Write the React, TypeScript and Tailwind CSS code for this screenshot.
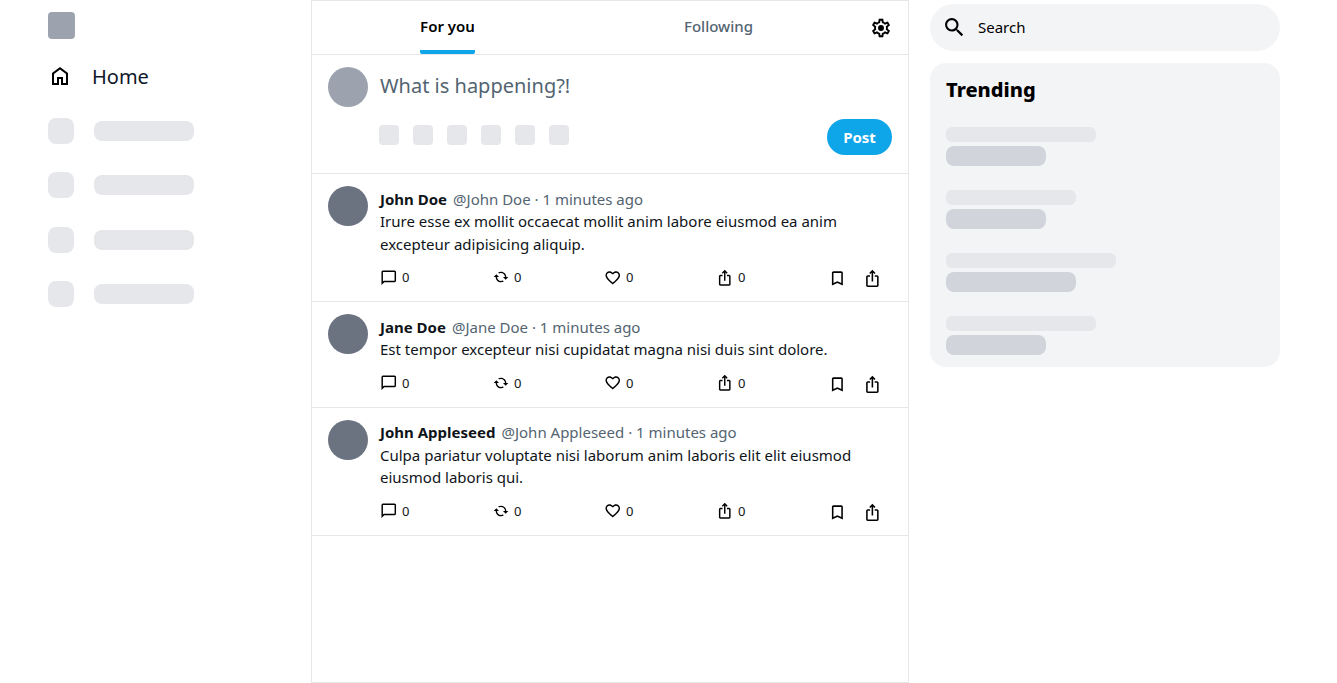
import React from "react";

type IconProps = { d: string; size?: string; box?: string };

function Icon({ d, size = "size-[18.75px]", box = "0 -960 960 960" }: IconProps) {
  return (
    <svg viewBox={box} className={`${size} shrink-0 fill-black`} aria-hidden="true">
      <path d={d} />
    </svg>
  );
}

const HOME = "M240-200h120v-240h240v240h120v-360L480-740 240-560v360Zm-80 80v-480l320-240 320 240v480H520v-240h-80v240H160Z";
const CHAT = "M80-80v-720q0-33 23.5-56.5T160-880h640q33 0 56.5 23.5T880-800v480q0 33-23.5 56.5T800-240H240L80-80Zm126-240h594v-480H160v525l46-45Z";
const SHARE = "M240-40q-33 0-56.5-23.5T160-120v-440q0-33 23.5-56.5T240-640h120v80H240v440h480v-440H600v-80h120q33 0 56.5 23.5T800-560v440q0 33-23.5 56.5T720-40H240Zm200-280v-447l-64 64-56-57 160-160 160 160-56 57-64-64v447h-80Z";
const BOOKMARK = "M200-120v-640q0-33 23.5-56.5T280-840h400q33 0 56.5 23.5T760-760v640L480-240 200-120Zm80-122 200-86 200 86v-518H280v518Z";
const SEARCH = "M15.5 14h-.79l-.28-.27C15.41 12.59 16 11.11 16 9.5 16 5.91 13.09 3 9.5 3S3 5.91 3 9.5 5.91 16 9.5 16c1.61 0 3.09-.59 4.23-1.57l.27.28v.79l5 4.99L20.49 19l-4.99-5zm-6 0C7.01 14 5 11.99 5 9.5S7.01 5 9.5 5 14 7.01 14 9.5 11.99 14 9.5 14z";
const HEART = "M16.5 3c-1.74 0-3.41.81-4.5 2.09C10.91 3.81 9.24 3 7.5 3 4.42 3 2 5.42 2 8.5c0 3.78 3.4 6.86 8.55 11.54L12 21.35l1.45-1.32C18.6 15.36 22 12.28 22 8.5 22 5.42 19.58 3 16.5 3zm-4.4 15.55-.1.1-.1-.1C7.14 14.24 4 11.39 4 8.5 4 6.5 5.5 5 7.5 5c1.54 0 3.04.99 3.57 2.36h1.87C13.46 5.99 14.96 5 16.5 5c2 0 3.5 1.5 3.5 3.5 0 2.89-3.14 5.74-7.9 10.05z";
const CYCLE = "M5 8 1 12h3c0 4.42 3.58 8 8 8 1.57 0 3.03-.46 4.26-1.24L14.8 17.3c-.83.45-1.79.7-2.8.7-3.31 0-6-2.69-6-6h3L5 8zm13 4h-3l4 4 4-4h-3c0-4.42-3.58-8-8-8-1.57 0-3.03.46-4.26 1.24L9.2 6.7c.83-.45 1.79-.7 2.8-.7 3.31 0 6 2.69 6 6z";
const GEAR = "M19.43 12.98c.04-.32.07-.64.07-.98s-.03-.66-.07-.98l2.11-1.65c.19-.15.24-.42.12-.64l-2-3.46c-.09-.16-.26-.25-.44-.25-.06 0-.12.01-.17.03l-2.49 1c-.52-.4-1.08-.73-1.69-.98l-.38-2.65C14.46 2.18 14.25 2 14 2h-4c-.25 0-.46.18-.49.42l-.38 2.65c-.61.25-1.17.59-1.69.98l-2.49-1c-.06-.02-.12-.03-.18-.03-.17 0-.34.09-.43.25l-2 3.46c-.13.22-.07.49.12.64l2.11 1.65c-.04.32-.07.65-.07.98s.03.66.07.98l-2.11 1.65c-.19.15-.24.42-.12.64l2 3.46c.09.16.26.25.44.25.06 0 .12-.01.17-.03l2.49-1c.52.4 1.08.73 1.69.98l.38 2.65c.03.24.24.42.49.42h4c.25 0 .46-.18.49-.42l.38-2.65c.61-.25 1.17-.59 1.69-.98l2.49 1c.06.02.12.03.18.03.17 0 .34-.09.43-.25l2-3.46c.12-.22.07-.49-.12-.64l-2.11-1.65zm-1.98-1.71c.04.31.05.52.05.73 0 .21-.02.43-.05.73l-.14 1.13.89.7 1.08.84-.7 1.21-1.27-.51-1.04-.42-.9.68c-.43.32-.84.56-1.25.73l-1.06.43-.16 1.13-.2 1.35h-1.4l-.19-1.35-.16-1.13-1.06-.43c-.43-.18-.83-.41-1.23-.71l-.91-.7-1.06.43-1.27.51-.7-1.21 1.08-.84.89-.7-.14-1.13c-.03-.31-.05-.54-.05-.74s.02-.43.05-.73l.14-1.13-.89-.7-1.08-.84.7-1.21 1.27.51 1.04.42.9-.68c.43-.32.84-.56 1.25-.73l1.06-.43.16-1.13.2-1.35h1.39l.19 1.35.16 1.13 1.06.43c.43.18.83.41 1.23.71l.91.7 1.06-.43 1.27-.51.7 1.21-1.07.85-.89.7.14 1.13zM12 8.8a3.2 3.2 0 1 0 0 6.4 3.2 3.2 0 0 0 0-6.4z";

function Sidebar() {
  return (
    <nav className="w-[263px] pt-3">
      <div className="size-[27px] rounded bg-[#9ca3af]" />
      <a className="mt-[23px] flex h-[30px] items-center gap-5 text-xl text-[#0f172a]">
        <span className="pb-0.5">
          <Icon d={HOME} size="size-6" />
        </span>
        Home
      </a>
      <div className="mt-[26px] flex flex-col gap-[28.3px]">
        {[1, 2, 3, 4].map((n) => (
          <div key={n} className="flex items-center gap-5">
            <div className="size-[26px] rounded-lg bg-[#e5e7eb]" />
            <div className="h-5 w-[100px] rounded-lg bg-[#e5e7eb]" />
          </div>
        ))}
      </div>
    </nav>
  );
}

type Tweet = { name: string; text: string };

const tweets: Tweet[] = [
  { name: "John Doe", text: "Irure esse ex mollit occaecat mollit anim labore eiusmod ea anim excepteur adipisicing aliquip." },
  { name: "Jane Doe", text: "Est tempor excepteur nisi cupidatat magna nisi duis sint dolore." },
  { name: "John Appleseed", text: "Culpa pariatur voluptate nisi laborum anim laboris elit elit eiusmod eiusmod laboris qui." },
];

function Action({ children }: { children: React.ReactNode }) {
  return (
    <div className="flex w-28 items-center gap-1 text-[13px] leading-4">
      <span className="flex w-[18px] justify-center">{children}</span>0
    </div>
  );
}

function Post({ name, text }: Tweet) {
  return (
    <article className="flex gap-3 border-b border-[#e5e7eb] px-4 pt-3 pb-[14.25px]">
      <div className="size-10 shrink-0 rounded-full bg-[#6b7280]" />
      <div className="min-w-0 flex-1 pt-[1.75px] leading-[22.5px] text-[#0f1419]">
        <div className="flex gap-1.5 text-[#536471]">
          <span className="font-bold text-[#0f1419]">{name}</span>
          <span>@{name} · 1 minutes ago</span>
        </div>
        <p>{text}</p>
        <div className="mt-[12.75px] flex h-[18.75px] items-center">
          <Action><Icon d={CHAT} size="size-[17.5px]" /></Action>
          <Action><Icon d={CYCLE} size="size-4" box="0 0 24 24" /></Action>
          <Action><Icon d={HEART} size="size-[17.5px]" box="0 0 24 24" /></Action>
          <Action><Icon d={SHARE} size="size-[17.5px]" /></Action>
          <div className="flex gap-4 pt-[2.5px]">
            <Icon d={BOOKMARK} />
            <Icon d={SHARE} />
          </div>
        </div>
      </div>
    </article>
  );
}

const trends = [
  ["w-[150px]", "w-[100px]"],
  ["w-[130px]", "w-[100px]"],
  ["w-[170px]", "w-[130px]"],
  ["w-[150px]", "w-[100px]"],
];

export default function App() {
  return (
    <div className="flex h-[683px] overflow-hidden bg-white pl-12 font-['Noto_Sans',sans-serif] text-[15px] text-black">
      <Sidebar />
      <main className="w-[598px] border border-[#e5e7eb]">
        <div className="flex h-[54px] border-b border-[#e5e7eb]">
          <div className="flex w-[271px] justify-center">
            <div className="flex flex-col font-semibold">
              <span className="flex flex-1 items-center pt-0.5">For you</span>
              <span className="h-1 rounded-b-xs bg-[#0ea5e9]" />
            </div>
          </div>
          <div className="flex w-[271px] items-center justify-center pb-0.5 font-medium text-[#536471]">Following</div>
          <div className="flex flex-1 items-center justify-center">
            <Icon d={GEAR} size="size-[22px] stroke-black [stroke-width:0.1]" box="0 0 24 24" />
          </div>
        </div>
        <section className="flex h-[119px] gap-3 border-b border-[#e5e7eb] px-4 pt-3">
          <div className="size-10 rounded-full bg-[#9ca3af]" />
          <div className="flex-1">
            <div className="flex h-[38px] items-center text-xl text-[#536471]">What is happening?!</div>
            <div className="mt-3.5 flex items-start justify-between">
              <div className="-ml-px flex gap-3.5 pt-1.5">
                {[1, 2, 3, 4, 5, 6].map((n) => <div key={n} className="size-5 rounded bg-[#e5e7eb]" />)}
              </div>
              <button className="h-9 w-[65px] rounded-full bg-[#0ea5e9] font-bold text-white">Post</button>
            </div>
          </div>
        </section>
        {tweets.map((t) => <Post key={t.name} {...t} />)}
      </main>
      <aside className="ml-[21px] w-[350px] pt-1">
        <div className="flex h-[47px] items-center gap-[11.25px] rounded-full bg-[#f3f4f6] px-3">
          <Icon d={SEARCH} size="size-[24.75px]" box="0 0 24 24" />
          <span>Search</span>
        </div>
        <section className="mt-3 h-[304px] rounded-2xl bg-[#f3f4f6] px-4 pt-3">
          <h2 className="text-xl leading-[30px] font-extrabold">Trending</h2>
          <div className="mt-[22px] flex flex-col gap-6">
            {trends.map(([a, b], i) => (
              <div key={i} className="flex flex-col gap-1">
                <div className={`h-[15px] rounded-md bg-[#e5e7eb] ${a}`} />
                <div className={`h-5 rounded-lg bg-[#d1d5db] ${b}`} />
              </div>
            ))}
          </div>
        </section>
      </aside>
    </div>
  );
}
